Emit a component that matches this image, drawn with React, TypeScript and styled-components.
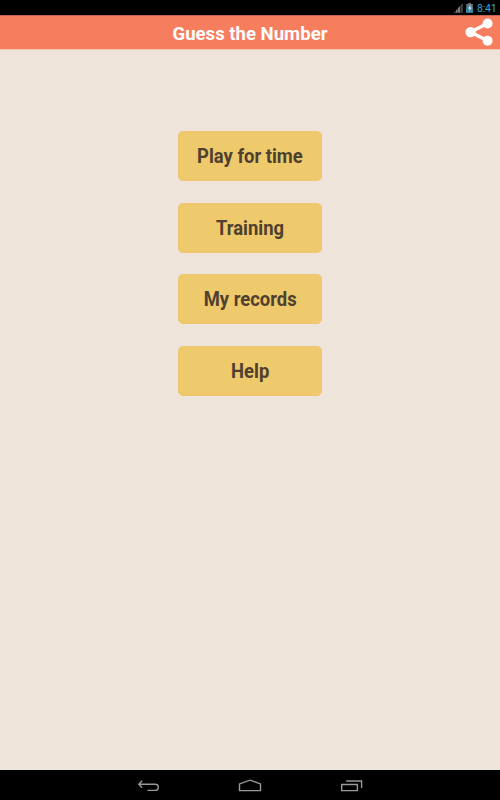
import React from 'react';
import styled, { createGlobalStyle } from 'styled-components';

const GlobalStyle = createGlobalStyle`
  * { box-sizing: border-box; }
  html, body { margin: 0; padding: 0; background: #eee4da; }
`;

const Screen = styled.div`
  display: flex;
  flex-direction: column;
  width: 100%;
  height: 100vh;
  overflow: hidden;
  background: #eee4da;
  font-family: Roboto, sans-serif;
`;

const StatusBar = styled.div`
  flex: none;
  height: 15px;
  display: flex;
  justify-content: flex-end;
  align-items: center;
  padding-right: 4px;
  background: #000;
`;

const StatusIcons = styled.svg`
  display: block;
  width: 24px;
  height: 15px;
`;

const Clock = styled.span`
  width: 19px;
  padding-top: 1px;
  font-size: 10.5px;
  letter-spacing: -0.2px;
  line-height: 15px;
  white-space: nowrap;
  color: #33a5d0;
`;

const Header = styled.header`
  flex: none;
  height: 35px;
  display: grid;
  grid-template-columns: 40px 1fr 40px;
  align-items: start;
  background: #f67e5f;
  border-top: 1px solid #c5654c;
  border-bottom: 1px solid #f2c0ac;
`;

const Title = styled.h1`
  grid-column: 2;
  margin: 0;
  padding-top: 2px;
  font-size: 19px;
  font-weight: 700;
  line-height: 32px;
  text-align: center;
  white-space: nowrap;
  color: #fff;
  transform: scaleX(0.977);
`;

const ShareButton = styled.button`
  width: 40px;
  height: 33px;
  padding: 0;
  border: 0;
  background: none;
  svg { display: block; }
`;

const Menu = styled.main`
  flex: 1;
  display: flex;
  flex-direction: column;
  align-items: center;
  gap: 21.8px;
  padding-top: 80.8px;
`;

const MenuButton = styled.button`
  width: 144px;
  height: 50px;
  padding: 1px 0 0;
  border: 1px solid #efc575;
  border-radius: 5px;
  background: #eeca6c;
  color: #50402f;
  font-family: Roboto, sans-serif;
  font-size: 19.5px;
  font-weight: 700;
  white-space: nowrap;
`;

/* Slightly condensed lettering for the menu captions. */
const Caption = styled.span`
  display: inline-block;
  transform: scaleX(0.945);
`;

const NavBar = styled.nav`
  flex: none;
  height: 30px;
  display: flex;
  justify-content: center;
  gap: 78px;
  background: #000;
`;

const NavIcon = styled.svg`
  display: block;
  width: 24px;
  height: 30px;
  fill: none;
  stroke: #999;
  stroke-width: 1.4;
`;

const items = ['Play for time', 'Training', 'My records', 'Help'];

export default function App() {
  return (
    <Screen>
      <GlobalStyle />
      <StatusBar>
        <StatusIcons viewBox="0 0 24 15">
          <path d="M7.4 5.4 9.8 3V12.8H7.4Z" fill="#444" />
          <path d="M1 12.8 2.6 11V12.8ZM3 10.4 4.6 8.6V12.8H3ZM5.1 8 6.9 6V12.8H5.1Z" fill="#888" />
          <path d="M13.3 4h1.8V3h2.8v1h1.9v8.7h-6.5Z" fill="#68777e" />
          <path d="M13.3 7h6.5v5.7h-6.5Z" fill="#3288a9" />
          <path d="m17.6 4.6-2.4 3.8h1.5l-.5 3 2.5-4H17Z" fill="#e8f3f7" />
        </StatusIcons>
        <Clock>8:41</Clock>
      </StatusBar>
      <Header>
        <Title>Guess the Number</Title>
        <ShareButton aria-label="Share">
          <svg width="40" height="33" viewBox="0 0 40 33">
            <path d="M27.5 7.6 10.5 16.1l17 8.6" fill="none" stroke="#fff" strokeWidth="3.4" />
            <circle cx="27.6" cy="7.5" r="5" fill="#fff" />
            <circle cx="10.6" cy="16.1" r="5.2" fill="#fff" />
            <circle cx="27.6" cy="24.7" r="5" fill="#fff" />
          </svg>
        </ShareButton>
      </Header>
      <Menu>
        {items.map((label) => (
          <MenuButton key={label}>
            <Caption>{label}</Caption>
          </MenuButton>
        ))}
      </Menu>
      <NavBar>
        <NavIcon viewBox="0 0 24 30">
          <path d="M6.2 10.7 2.8 14.3l3.4 3.4M3 14.3H19Q22.2 14.3 22.2 16.6V18Q22.2 20.4 19.2 20.4H11.5" />
        </NavIcon>
        <NavIcon viewBox="0 0 24 30">
          <path d="M1.5 20.6V13.9L12 10.2 22.5 13.9V20.6Z" />
        </NavIcon>
        <NavIcon viewBox="0 0 24 30">
          <path d="M1.7 14.5H17.4V20.6H1.7ZM6.2 11H21.6V18" />
        </NavIcon>
      </NavBar>
    </Screen>
  );
}
